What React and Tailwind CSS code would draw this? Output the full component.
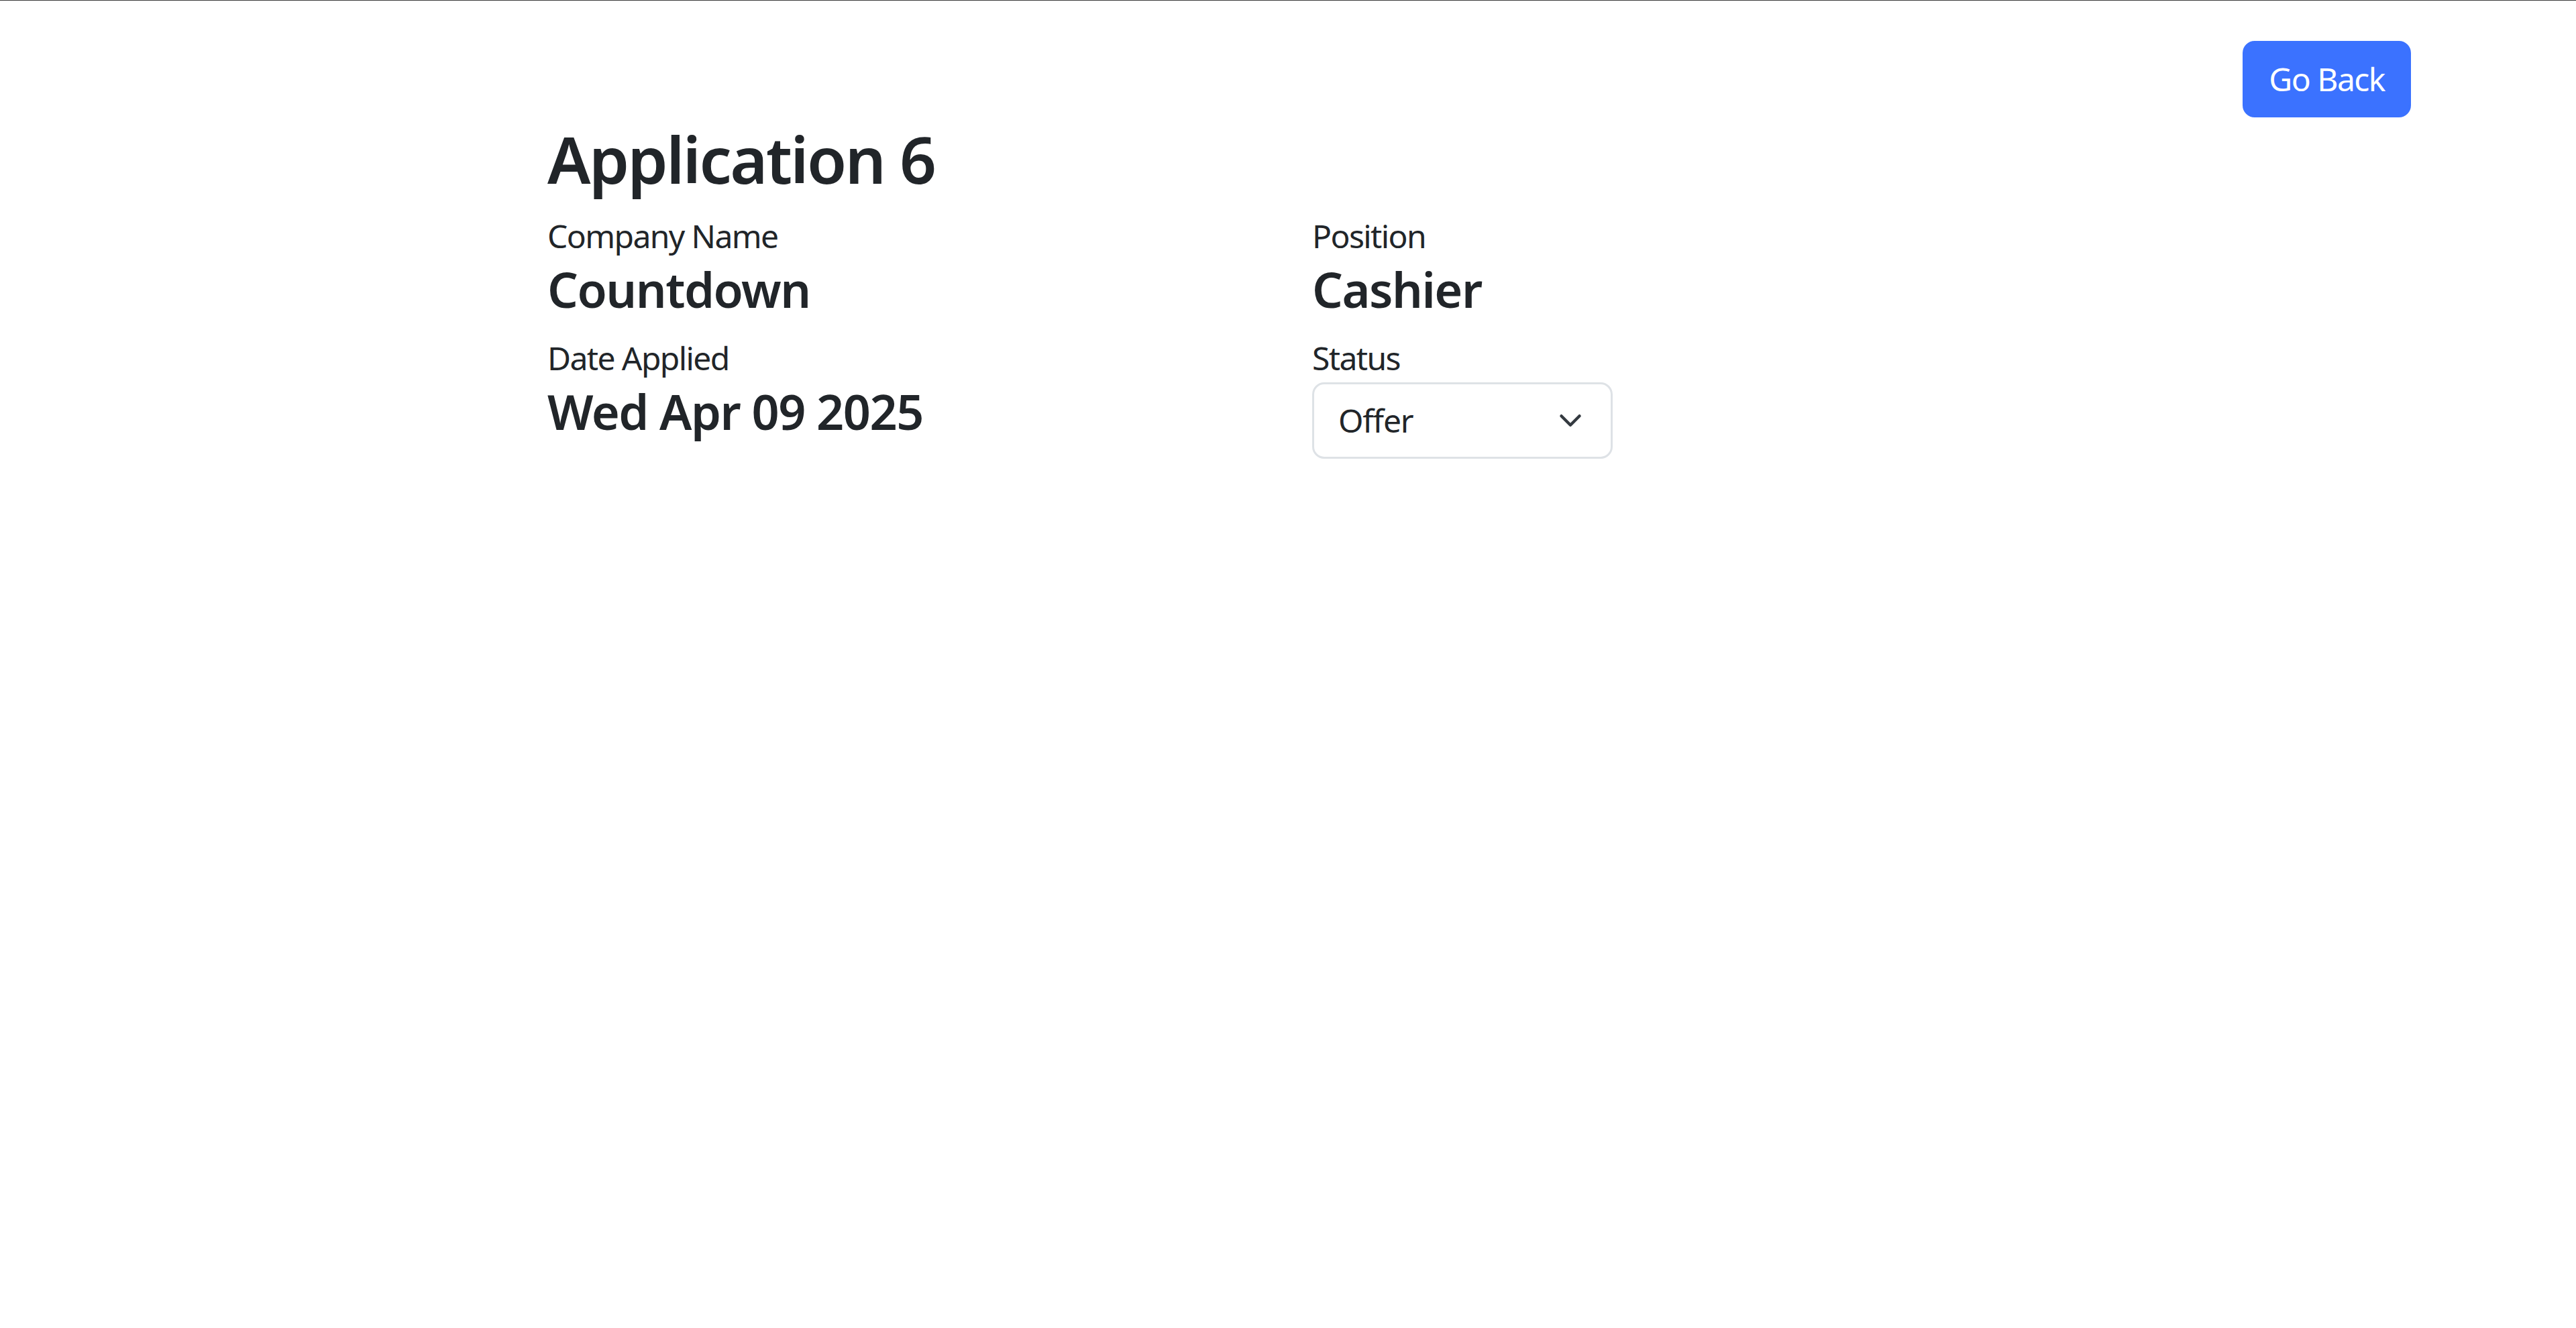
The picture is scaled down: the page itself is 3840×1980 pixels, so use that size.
import React from "react";

function Field({ label, children }) {
  return (
    <div className="flex flex-col">
      <label className="text-[48px] leading-[72px] font-normal tracking-[-1.6px]">{label}</label>
      {children}
    </div>
  );
}

export default function App() {
  return (
    <div
      className="min-h-screen bg-white text-[#212529]"
      style={{ fontFamily: '"Noto Sans", "Open Sans", sans-serif' }}
    >
      <div className="h-px w-full bg-[#3c3c3c]" />
      <div className="mx-auto w-[3348px]">
        <div className="flex justify-end pt-[60px]">
          <button className="h-[114px] px-[36px] rounded-[18px] border-[3px] border-[#3b72ff] bg-[#3b72ff] text-white text-[48px] leading-[72px] tracking-[-1.5px]">
            Go Back
          </button>
        </div>
        <div className="ml-[570px] w-[2208px] mt-[4px]">
          <h2 className="text-[96px] leading-[115px] font-semibold mb-[22px] tracking-[-2.5px]">
            Application 6
          </h2>
          <div className="grid grid-cols-[1140px_1140px]">
            <Field label="Company Name">
              <h4 className="text-[72px] leading-[86px] font-semibold mb-[24px] tracking-[-1.5px]">
                Countdown
              </h4>
            </Field>
            <Field label="Position">
              <h4 className="text-[72px] leading-[86px] font-semibold mb-[24px] tracking-[-1.5px]">
                Cashier
              </h4>
            </Field>
            <Field label="Date Applied">
              <h4 className="text-[72px] leading-[86px] font-semibold mb-[24px] tracking-[-1.5px]">
                Wed Apr 09 2025
              </h4>
            </Field>
            <Field label="Status">
              <div className="flex h-[114px] w-[448px] items-center justify-between rounded-[18px] border-[3px] border-[#dee2e6] bg-white pl-[36px] pr-[36px]">
                <span className="text-[48px] leading-[72px] tracking-[-1.2px]">Offer</span>
                <svg width="48" height="36" viewBox="0 0 16 16" fill="none">
                  <path
                    d="m2 5 6 6 6-6"
                    stroke="#343a40"
                    strokeWidth="2"
                    strokeLinecap="round"
                    strokeLinejoin="round"
                  />
                </svg>
              </div>
            </Field>
          </div>
        </div>
      </div>
    </div>
  );
}
